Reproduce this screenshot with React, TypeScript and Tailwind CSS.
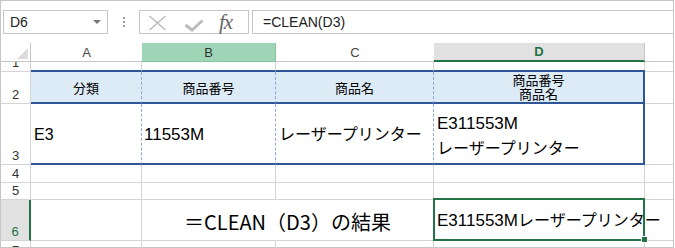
import React from "react";

const jp = "font-['Liberation_Sans','Noto_Sans_CJK_JP',sans-serif]";

function RowNum({ children, className = "" }: { children?: React.ReactNode; className?: string }) {
  return (
    <div
      className={
        "w-[30px] shrink-0 border-r border-b border-[#d4d4d4] flex items-end justify-center pb-[2px] text-[13px] leading-none text-[#333] overflow-hidden " +
        className
      }
    >
      {children}
    </div>
  );
}

export default function App() {
  return (
    <div className={"w-[675px] h-[248px] bg-white overflow-hidden " + jp}>
      <div className="w-[674px] h-[248px] border border-[#c6c6c6] flex flex-col overflow-hidden">
        {/* Formula bar */}
        <div className="h-[42px] shrink-0 flex items-start pt-[9px]">
          <div className="ml-[2px] w-[105px] h-[24px] border border-[#c6c6c6] flex items-center justify-between pl-[6px] pr-[6px]">
            <span className="text-[14px] text-[#222] leading-none">D6</span>
            <svg width="8" height="4" viewBox="0 0 8 4">
              <polygon points="0,0 8,0 4,4" fill="#777" />
            </svg>
          </div>
          <div className="w-[31px] h-[24px] flex flex-col items-center justify-center gap-[2px]">
            <div className="w-[2px] h-[2px] bg-[#9a9a9a]" />
            <div className="w-[2px] h-[2px] bg-[#9a9a9a]" />
            <div className="w-[2px] h-[2px] bg-[#9a9a9a]" />
          </div>
          <div className="w-[110px] h-[24px] border border-[#c6c6c6] flex items-center pl-[8px]">
            <svg width="19" height="16" viewBox="0 0 19 16" className="mt-[1px]">
              <line x1="1.5" y1="1" x2="17.5" y2="15" stroke="#bcbcbc" strokeWidth="1.6" />
              <line x1="17.5" y1="1" x2="1.5" y2="15" stroke="#bcbcbc" strokeWidth="1.6" />
            </svg>
            <svg width="20" height="13" viewBox="0 0 20 13" className="ml-[17px] mt-[6px]">
              <polyline points="1.5,6 8,11 18.5,1.5" fill="none" stroke="#bcbcbc" strokeWidth="3" />
            </svg>
            <span className="ml-[15px] font-['Liberation_Serif',serif] italic text-[21px] leading-none text-[#666] tracking-[-1px] mt-[1px]">
              fx
            </span>
          </div>
          <div className="ml-[3px] flex-1 h-[24px] border-y border-l border-[#c6c6c6] flex items-center pl-[10px]">
            <span className="text-[14px] text-[#222] leading-none">=CLEAN(D3)</span>
          </div>
        </div>

        {/* Column header */}
        <div className="h-[19px] shrink-0 flex">
          <div className="w-[30px] shrink-0 border-r border-b border-[#c6c6c6] flex items-end justify-end pr-[2px] pb-[2px]">
            <svg width="11" height="11" viewBox="0 0 11 11">
              <polygon points="11,0 11,11 0,11" fill="#dcdcdc" />
            </svg>
          </div>
          <div className="w-[111px] shrink-0 border-b border-[#c6c6c6] flex items-center justify-center text-[13px] text-[#444] leading-none">
            A
          </div>
          <div className="w-[134px] shrink-0 bg-[#9fd5b7] border-r border-b border-[#86c3a2] flex items-center justify-center text-[13px] text-[#333] leading-none">
            B
          </div>
          <div className="w-[158px] shrink-0 border-b border-[#c6c6c6] flex items-center justify-center text-[13px] text-[#444] leading-none">
            C
          </div>
          <div className="w-[211px] shrink-0 bg-[#e1e1e1] border-r border-r-[#c6c6c6] border-b-2 border-b-[#217346] flex items-center justify-center text-[13px] font-bold text-[#217346] leading-none">
            D
          </div>
          <div className="flex-1 border-b border-[#c6c6c6]" />
        </div>

        {/* Row 1 */}
        <div className="h-[10px] shrink-0 flex">
          <RowNum>1</RowNum>
          <div className="w-[111px] shrink-0 border-r border-r-[#d4d4d4] border-b-2 border-b-[#2f5597]" />
          <div className="w-[134px] shrink-0 border-r border-r-[#d4d4d4] border-b-2 border-b-[#2f5597]" />
          <div className="w-[158px] shrink-0 border-r border-r-[#d4d4d4] border-b-2 border-b-[#2f5597]" />
          <div className="w-[210px] shrink-0 border-b-2 border-b-[#2f5597]" />
          <div className="w-[1px] shrink-0 border-b-2 border-b-[#2f5597] bg-[#d4d4d4]" />
          <div className="flex-1 border-b border-[#d4d4d4]" />
        </div>

        {/* Row 2 */}
        <div className="h-[32px] shrink-0 flex text-[13px] text-black">
          <RowNum>2</RowNum>
          <div className="w-[111px] shrink-0 bg-[#ddebf7] border-r border-r-[#8eaadb] [border-right-style:dashed] border-b-2 border-b-[#2f5597] flex items-center justify-center pt-[3px]">
            分類
          </div>
          <div className="w-[134px] shrink-0 bg-[#ddebf7] border-r border-r-[#8eaadb] [border-right-style:dashed] border-b-2 border-b-[#2f5597] flex items-center justify-center pt-[3px]">
            商品番号
          </div>
          <div className="w-[158px] shrink-0 bg-[#ddebf7] border-r border-r-[#8eaadb] [border-right-style:dashed] border-b-2 border-b-[#2f5597] flex items-center justify-center pt-[3px]">
            商品名
          </div>
          <div className="w-[211px] shrink-0 bg-[#ddebf7] border-r-2 border-r-[#2f5597] border-b-2 border-b-[#2f5597] flex flex-col items-center justify-center leading-[14px] pt-[1px]">
            <span>商品番号</span>
            <span>商品名</span>
          </div>
          <div className="flex-1 border-b border-[#d4d4d4]" />
        </div>

        {/* Row 3 */}
        <div className="h-[61px] shrink-0 flex text-[16px] text-black">
          <RowNum>3</RowNum>
          <div className="w-[111px] shrink-0 border-r border-r-[#8eaadb] [border-right-style:dashed] border-b-2 border-b-[#2f5597] flex items-center pl-[3px] pt-[3px] text-[16px]">
            E3
          </div>
          <div className="w-[134px] shrink-0 border-r border-r-[#8eaadb] [border-right-style:dashed] border-b-2 border-b-[#2f5597] flex items-center pl-[2px] pt-[3px] text-[17px]">
            11553M
          </div>
          <div className="w-[158px] shrink-0 border-r border-r-[#8eaadb] [border-right-style:dashed] border-b-2 border-b-[#2f5597] flex items-center pl-[3px] pt-[3px] whitespace-nowrap">
            レーザープリンター
          </div>
          <div className="w-[211px] shrink-0 border-r-2 border-r-[#2f5597] border-b-2 border-b-[#2f5597] flex flex-col justify-center pl-[3px] pt-[5px] leading-[25px] whitespace-nowrap">
            <span className="text-[17px]">E311553M</span>
            <span>レーザープリンター</span>
          </div>
          <div className="flex-1 border-b border-[#d4d4d4]" />
        </div>

        {/* Row 4 */}
        <div className="h-[18px] shrink-0 flex">
          <RowNum>4</RowNum>
          <div className="w-[111px] shrink-0 border-r border-b border-[#d4d4d4]" />
          <div className="w-[134px] shrink-0 border-r border-b border-[#d4d4d4]" />
          <div className="w-[158px] shrink-0 border-r border-b border-[#d4d4d4]" />
          <div className="w-[211px] shrink-0 border-r border-b border-[#d4d4d4]" />
          <div className="flex-1 border-b border-[#d4d4d4]" />
        </div>

        {/* Row 5 */}
        <div className="h-[17px] shrink-0 flex">
          <RowNum>5</RowNum>
          <div className="w-[111px] shrink-0 border-r border-b border-[#d4d4d4]" />
          <div className="w-[134px] shrink-0 border-r border-b border-[#d4d4d4]" />
          <div className="w-[158px] shrink-0 border-r border-b border-[#d4d4d4]" />
          <div className="w-[211px] shrink-0 border-r border-b border-[#d4d4d4]" />
          <div className="flex-1 border-b border-[#d4d4d4]" />
        </div>

        {/* Row 6 */}
        <div className="h-[41px] shrink-0 flex">
          <RowNum className="bg-[#e1e1e1] border-r-2 border-r-[#217346] text-[#217346]">6</RowNum>
          <div className="w-[111px] shrink-0 border-r border-b border-[#d4d4d4]" />
          <div className="w-[292px] shrink-0 border-r border-b border-[#d4d4d4] flex items-center justify-center pt-[3px] text-[20px] text-black font-['Noto_Sans_CJK_JP',sans-serif] whitespace-nowrap">
            ＝CLEAN（D3）の結果
          </div>
          <div className="w-[211px] shrink-0 border-r border-b border-[#d4d4d4] relative flex items-center pl-[3px] pt-[1px]">
            <span className="text-[16px] text-black whitespace-nowrap relative z-0">
              <span className="text-[17px]">E311553M</span>レーザープリンター
            </span>
            <div className="absolute left-[-1px] top-[-2px] w-[212px] h-[43px] border-2 border-[#217346] z-10 pointer-events-none" />
            <div className="absolute left-[207px] top-[36px] w-[7px] h-[7px] bg-[#217346] border border-white z-20" />
          </div>
          <div className="flex-1 border-b border-[#d4d4d4]" />
        </div>

        {/* Row 7 */}
        <div className="flex-1 flex">
          <div className="w-[30px] shrink-0 border-r border-[#d4d4d4] flex items-start justify-center pt-[3px] text-[13px] leading-none text-[#333] overflow-hidden">
            7
          </div>
          <div className="w-[111px] shrink-0 border-r border-[#d4d4d4]" />
          <div className="w-[134px] shrink-0 border-r border-[#d4d4d4]" />
          <div className="w-[158px] shrink-0 border-r border-[#d4d4d4]" />
          <div className="w-[211px] shrink-0 border-r border-[#d4d4d4]" />
          <div className="flex-1" />
        </div>
      </div>
    </div>
  );
}
